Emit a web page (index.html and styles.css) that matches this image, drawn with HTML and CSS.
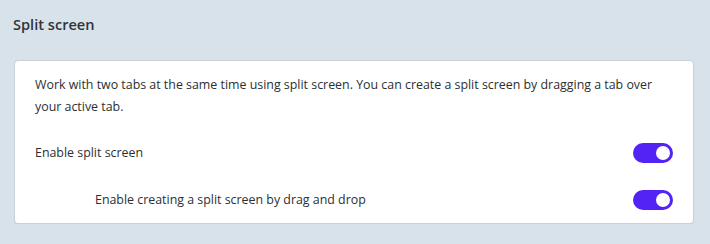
FILE: index.html
```html
<!DOCTYPE html>
<html>
<head>
<meta charset="utf-8">
<link rel="stylesheet" href="styles.css">
</head>
<body>
<div class="page">
  <h2 class="title">Split screen</h2>
  <div class="card">
    <p class="desc">Work with two tabs at the same time using split screen. You can create a split screen by dragging a tab over your active tab.</p>
    <div class="row">
      <span class="label">Enable split screen</span>
      <span class="toggle on"><span class="knob"></span></span>
    </div>
    <div class="row sub">
      <span class="label">Enable creating a split screen by drag and drop</span>
      <span class="toggle on"><span class="knob"></span></span>
    </div>
  </div>
</div>
</body>
</html>
```
FILE: styles.css
```css
html, body {
  margin: 0;
  padding: 0;
  background: #d8e2ea;
}
body {
  font-family: "Open Sans", "Noto Sans", sans-serif;
  color: #2b2f33;
}
.page {
  padding: 13px 16px 0 14px;
}
.title {
  margin: 0 0 25px -1px;
  font-size: 14.6px;
  font-weight: 600;
  line-height: 22px;
  color: #30343a;
}
.card {
  background: #ffffff;
  border: 1px solid #c9d0d6;
  border-radius: 4px;
  padding: 13px 20px 0 20px;
  box-shadow: 0 1px 1px rgba(0,0,0,0.06);
}
.desc {
  margin: 0 -8px 11px 0;
  font-size: 12.4px;
  line-height: 22px;
}
.row {
  display: flex;
  align-items: center;
  justify-content: space-between;
  height: 47px;
  font-size: 12.4px;
}
.row.sub {
  padding-left: 60px;
}
.toggle {
  width: 40px;
  height: 20px;
  border-radius: 10px;
  background: #5322f5;
  display: flex;
  align-items: center;
  justify-content: flex-end;
  padding: 0 3px;
  box-sizing: border-box;
}
.knob {
  width: 14px;
  height: 14px;
  border-radius: 50%;
  background: #ffffff;
}
```
